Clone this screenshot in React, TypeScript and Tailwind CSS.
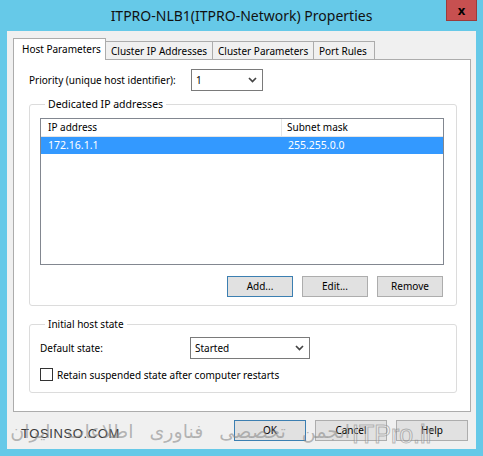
import React from 'react';

const FONT = { fontFamily: '"Noto Sans", "Open Sans", "Liberation Sans", sans-serif' };

function Tab({ label, active, w }: { label: string; active?: boolean; w: string }) {
  if (active) {
    return (
      <div className={`${w} relative z-10 -mb-px h-[22px] border border-b-0 border-[#acacac] bg-white pl-[8px] pt-[2px] leading-[16px]`}>
        {label}
      </div>
    );
  }
  return (
    <div className={`${w} h-[18px] border border-b-0 border-l-0 border-[#acacac] bg-[#f0f0f0] pl-[5px] leading-[18px]`}>
      {label}
    </div>
  );
}

function Btn({ label, focused, w = 'w-[66px]' }: { label: string; focused?: boolean; w?: string }) {
  return (
    <div
      className={`${w} flex h-[21px] items-center justify-center border bg-[#e1e1e1] ${
        focused ? 'border-[#3c7fb1]' : 'border-[#adadad]'
      }`}
    >
      {label}
    </div>
  );
}

function Chevron() {
  return (
    <svg width="9" height="6" viewBox="0 0 9 6" className="text-[#444]">
      <path d="M1 1 L4.5 4.5 L8 1" fill="none" stroke="currentColor" strokeWidth="1.7" />
    </svg>
  );
}

function Combo({ value, w }: { value: string; w: string }) {
  return (
    <div className={`${w} flex h-[22px] items-center justify-between border border-[#7a7a7a] bg-white pl-[4px] pr-[5px]`}>
      <span>{value}</span>
      <Chevron />
    </div>
  );
}

export default function App() {
  return (
    <div className="relative h-[456px] w-[483px] overflow-hidden bg-[#66c9e8] text-[10px] text-black" style={FONT}>
      {/* title bar */}
      <div className="relative flex h-[31px] items-center justify-center">
        <span className="whitespace-nowrap text-[14px] leading-none text-[#111]">ITPRO-NLB1(ITPRO-Network) Properties</span>
        <div className="absolute right-[6px] top-0 flex h-[21px] w-[31px] items-center justify-center border border-t-0 border-[#9c3b3b] bg-[#c75050] text-[13px] font-bold leading-none text-black">
          x
        </div>
      </div>

      {/* client area */}
      <div className="mx-[7px] flex h-[418px] flex-col bg-[#f0f0f0] px-[6px] pt-[7px]">
        <div className="flex h-[21px] items-end whitespace-nowrap">
          <Tab label="Host Parameters" active w="w-[93px]" />
          <Tab label="Cluster IP Addresses" w="w-[107px]" />
          <Tab label="Cluster Parameters" w="w-[101px]" />
          <Tab label="Port Rules" w="w-[61px]" />
        </div>

        <div className="h-[353px] w-[458px] border border-[#acacac] bg-white px-[15px] pt-[9px]">
          <div className="flex items-center">
            <span className="w-[162px] whitespace-nowrap">Priority (unique host identifier):</span>
            <Combo value="1" w="w-[72px]" />
          </div>

          <fieldset className="mt-[5px] h-[210px] w-[428px] rounded-[3px] border border-[#dcdcdc] pl-[10px] pr-[12px]">
            <legend className="ml-[5px] px-[3px] text-[10.5px] leading-[16px]">Dedicated IP addresses</legend>
            <div className="mt-[6px] h-[147px] border border-[#828790] bg-white">
              <div className="flex h-[18px] border-b border-[#e5e5e5] leading-[17px]">
                <div className="w-[241px] border-r border-[#e5e5e5] pl-[7px]">IP address</div>
                <div className="pl-[5px]">Subnet mask</div>
              </div>
              <div className="flex h-[17px] bg-[#3399ff] text-[10.5px] leading-[17px] text-white">
                <div className="w-[241px] pl-[7px]">172.16.1.1</div>
                <div className="pl-[6px]">255.255.0.0</div>
              </div>
            </div>
            <div className="mt-[11px] flex justify-end gap-[9px] pr-[1px]">
              <Btn label="Add..." focused />
              <Btn label="Edit..." />
              <Btn label="Remove" />
            </div>
          </fieldset>

          <fieldset className="mt-[10px] h-[77px] w-[428px] rounded-[3px] border border-[#dcdcdc] pl-[10px]">
            <legend className="ml-[5px] px-[3px] leading-[16px]">Initial host state</legend>
            <div className="mt-[5px] flex items-center">
              <span className="w-[150px]">Default state:</span>
              <Combo value="Started" w="w-[120px]" />
            </div>
            <div className="mt-[9px] flex items-center gap-[4px]">
              <div className="h-[13px] w-[13px] border border-[#333] bg-white" />
              <span className="whitespace-nowrap leading-none">Retain suspended state after computer restarts</span>
            </div>
          </fieldset>
        </div>

        <div className="mt-[8px] flex justify-end gap-[9px] pr-[2px]">
          <Btn label="OK" w="w-[72px]" focused />
          <Btn label="Cancel" w="w-[72px]" />
          <Btn label="Help" w="w-[72px]" />
        </div>
      </div>

      {/* watermark */}
      <div
        className="pointer-events-none absolute left-[21px] top-[424px] whitespace-nowrap text-[13px] tracking-[0.6px] text-[#3a3a3a]"
        style={{ fontFamily: '"Liberation Sans", sans-serif' }}
      >
        TOSINSO.COM
      </div>
      <div
        dir="rtl"
        className="pointer-events-none absolute right-[133px] top-[417px] whitespace-nowrap text-[19px] text-[#8a8a8a]/60 [word-spacing:10px]"
        style={{ fontFamily: '"DejaVu Sans", "Noto Sans", sans-serif' }}
      >
        انجمن تخصصی فناوری اطلاعات ایران
      </div>
      <div
        className="pointer-events-none absolute left-[352px] top-[416px] text-[25px] text-white/30"
        style={{ fontFamily: '"Liberation Sans", sans-serif', WebkitTextStroke: '1px rgba(130,130,130,0.55)' }}
      >
        ITPro.ir
      </div>
    </div>
  );
}
